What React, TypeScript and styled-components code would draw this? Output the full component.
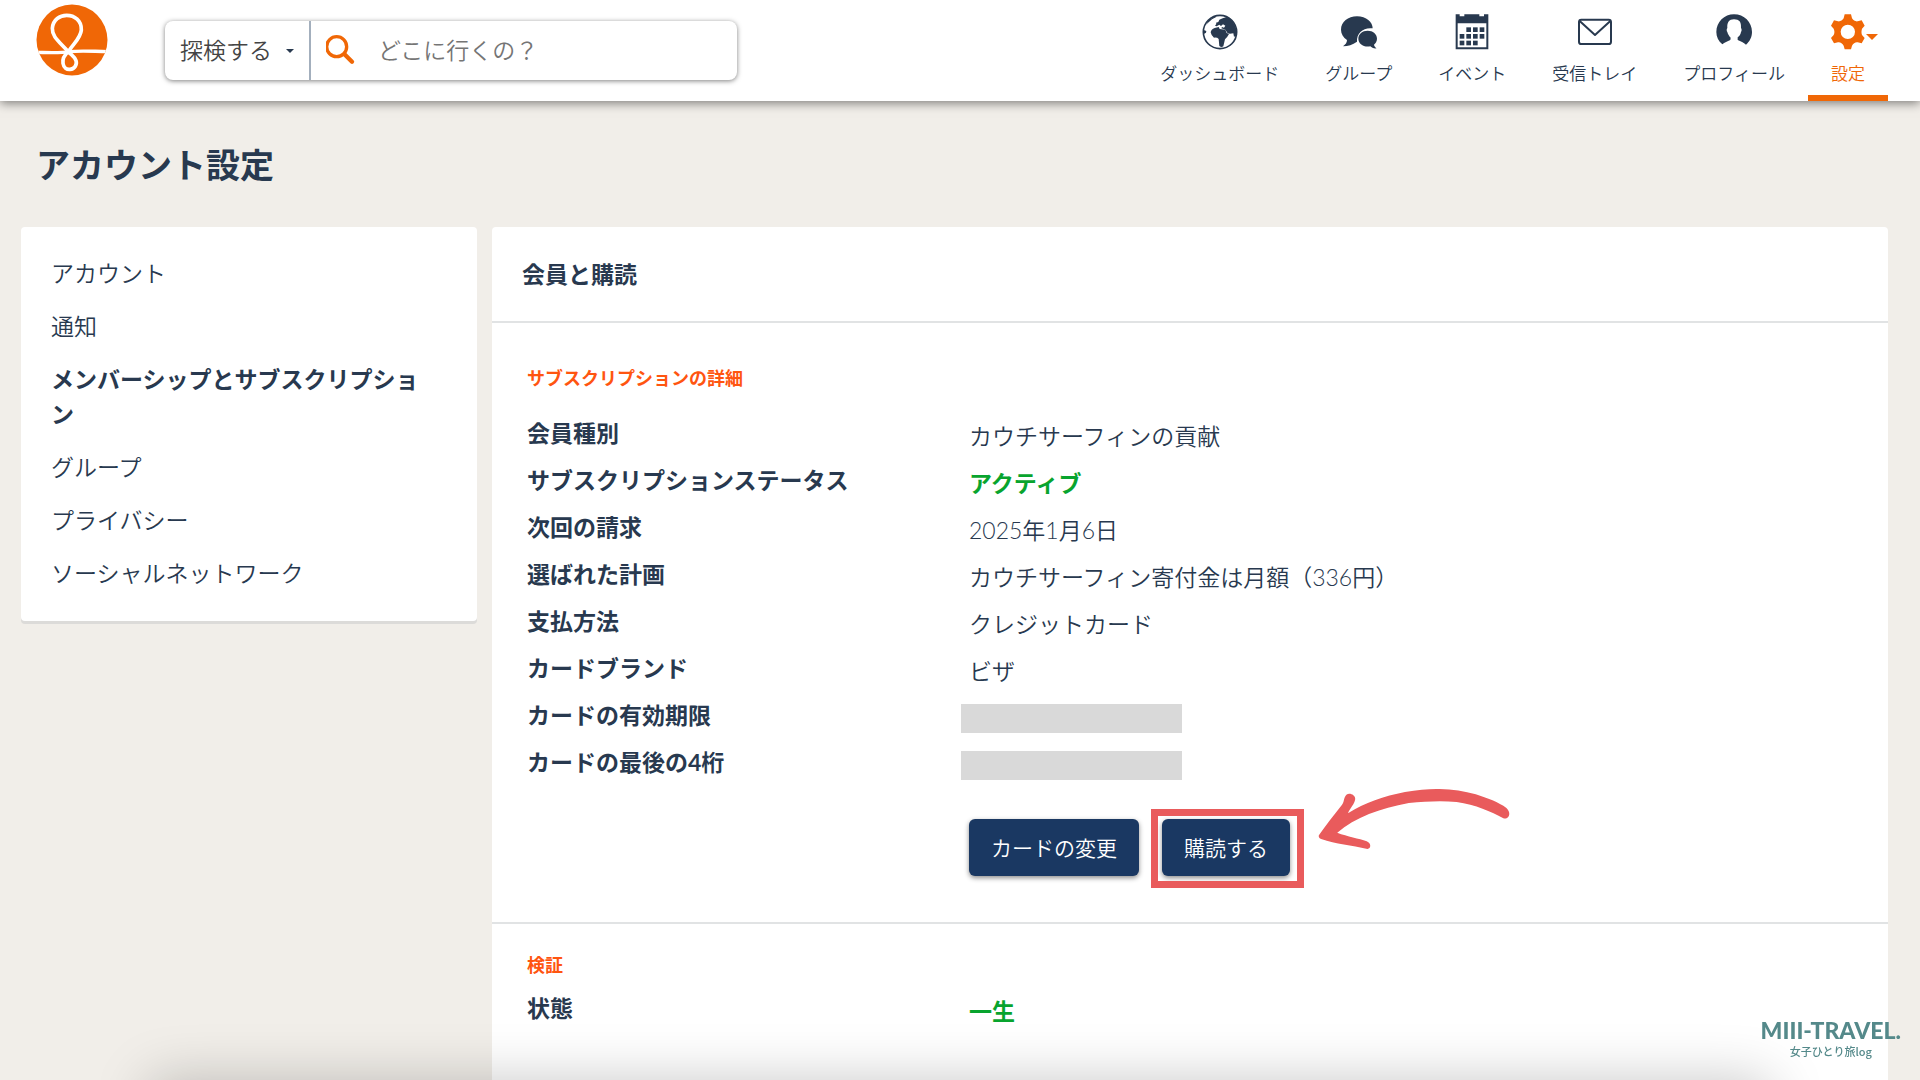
import React from 'react';
import styled, { createGlobalStyle } from 'styled-components';

const color = {
  page: '#f1eee9',
  ink: '#28394f',
  orange: '#f06706',
  heading: '#ff5510',
  green: '#08a42e',
  navy: '#1a3862',
  line: '#e1e3e4',
  mask: '#d9d9d9',
  mark: '#e95b5c',
  brand: '#54898a',
};

const GlobalStyle = createGlobalStyle`
  *, *::before, *::after { box-sizing: border-box; }
  body {
    margin: 0;
    background: ${color.page};
    color: ${color.ink};
    font-family: Lato, 'Noto Sans CJK JP', sans-serif;
    font-size: 23px;
    font-weight: 350;
    line-height: 35px;
  }
  h1, h2, h3, ul, dl, dd { margin: 0; padding: 0; }
  a { color: inherit; text-decoration: none; }
`;

const Page = styled.div`
  display: flex;
  flex-direction: column;
  min-height: 100vh;
`;

const Header = styled.header`
  display: flex;
  align-items: center;
  height: 101px;
  padding: 0 32px 0 36px;
  background: #fff;
  box-shadow: 0 2px 10px rgba(0, 0, 0, 0.5);
`;

const LogoLink = styled.a`
  align-self: flex-start;
  margin: 4px 57px 0 0;
  svg { display: block; }
`;

const SearchForm = styled.form`
  display: flex;
  flex: 0 1 572px;
  height: 59px;
  border-radius: 8px;
  background: #fff;
  box-shadow: 0 1px 5px rgba(0, 0, 0, 0.5);
`;

const SearchScope = styled.label`
  display: flex;
  align-items: center;
  flex: none;
  width: 146px;
  padding: 0 15px;
  border-right: 2px solid #a3afbd;
`;

const ScopeSelect = styled.select`
  appearance: none;
  flex: 1;
  min-width: 0;
  padding: 0;
  border: 0;
  background: none;
  color: #444;
  font: inherit;
`;

const SearchField = styled.label`
  display: flex;
  align-items: center;
  flex: 1;
  min-width: 0;
  gap: 20px;
  padding: 0 15px;
  svg { flex: none; }
`;

const SearchInput = styled.input`
  flex: 1;
  min-width: 0;
  padding: 0;
  border: 0;
  outline: 0;
  background: none;
  color: #444;
  font: inherit;
  &::placeholder { color: #757575; opacity: 1; }
`;

const Nav = styled.nav`
  display: flex;
  align-self: stretch;
  margin-left: auto;
`;

const NavLink = styled.a<{ $active?: boolean }>`
  display: flex;
  flex-direction: column;
  align-items: center;
  gap: 12px;
  padding: 14px 23px 0;
  color: ${(p) => (p.$active ? color.orange : color.ink)};
  font-size: 17px;
  line-height: 24px;
  white-space: nowrap;
  border-bottom: 6px solid ${(p) => (p.$active ? color.orange : 'transparent')};
`;

const IconBox = styled.span`
  position: relative;
  display: block;
  height: 36px;
  margin: 0 -1px;
  svg { display: block; }
`;

const MenuCaret = styled.span`
  position: absolute;
  left: 100%;
  top: 20px;
`;

const PageTitle = styled.h1`
  padding: 40px 36px 38px;
  font-size: 34px;
  line-height: 48px;
`;

const Columns = styled.div`
  display: grid;
  grid-template-columns: 456px minmax(0, 1fr);
  gap: 15px;
  flex: 1;
  padding: 0 32px 0 21px;
`;

const SideMenu = styled.nav`
  align-self: start;
  padding: 29px 36px 30px 30px;
  border-radius: 4px;
  background: #fff;
  box-shadow: 0 3px 0 #dcdbd9;
`;

const MenuList = styled.ul`
  display: flex;
  flex-direction: column;
  gap: 18px;
  list-style: none;
`;

const MenuLink = styled.a<{ $active?: boolean }>`
  display: block;
  font-weight: ${(p) => (p.$active ? 700 : 'inherit')};
`;

const Panel = styled.main`
  border-radius: 4px 4px 0 0;
  background: #fff;
`;

const PanelTitle = styled.h2`
  padding: 30px;
  border-bottom: 2px solid ${color.line};
  font-size: 23px;
  line-height: 34px;
`;

const Section = styled.section<{ $compact?: boolean }>`
  padding: ${(p) => (p.$compact ? '29px 35px' : '43px 35px 46px')};
  & + & { border-top: 2px solid ${color.line}; }
`;

const SectionTitle = styled.h3<{ $compact?: boolean }>`
  margin-bottom: ${(p) => (p.$compact ? '8px' : '20px')};
  color: ${color.heading};
  font-size: 18px;
  line-height: 24px;
`;

const Row = styled.div`
  display: grid;
  grid-template-columns: 1fr 2fr;
  height: 47px;
`;

const Term = styled.dt`
  font-weight: 700;
  line-height: 47px;
`;

const Value = styled.dd<{ $good?: boolean }>`
  display: flex;
  align-items: center;
  padding-top: 5px;
  ${(p) => p.$good && `color: ${color.green}; font-weight: 700;`}
`;

const Mask = styled.span`
  width: 221px;
  height: 29px;
  margin-left: -8px;
  background: ${color.mask};
`;

const ActionRow = styled.div`
  display: grid;
  grid-template-columns: 1fr 2fr;
  margin-top: 33px;
`;

const Actions = styled.div`
  display: flex;
  grid-column: 2;
  gap: 23px;
`;

const Button = styled.button`
  height: 57px;
  padding: 0 22px;
  border: 0;
  border-radius: 6px;
  background: ${color.navy};
  color: #fff;
  font: inherit;
  font-size: 21px;
  box-shadow: 0 2px 5px rgba(0, 0, 0, 0.45);
`;

const Marked = styled.div`
  position: relative;
  &::after {
    content: '';
    position: absolute;
    inset: -10px -14px -12px -11px;
    border: 7px solid ${color.mark};
    pointer-events: none;
  }
`;

const ArrowBox = styled.div`
  position: absolute;
  left: calc(100% + 27px);
  top: -32px;
  pointer-events: none;
  svg { display: block; }
`;

const BottomShade = styled.div`
  position: fixed;
  left: 150px;
  right: 150px;
  top: 100%;
  height: 120px;
  box-shadow: 0 0 55px rgba(0, 0, 0, 0.22);
  pointer-events: none;
`;

const Watermark = styled.div`
  position: fixed;
  right: 19px;
  bottom: 21px;
  color: ${color.brand};
  text-align: center;
`;

const WatermarkName = styled.div`
  font-size: 23px;
  font-weight: 900;
  line-height: 26px;
`;

const WatermarkTag = styled.div`
  font-family: 'Noto Sans CJK JP', sans-serif;
  font-size: 11px;
  font-weight: 500;
  line-height: 16px;
`;

const Logo = () => (
  <svg width="72" height="72" viewBox="106 10 216 216" role="img" aria-label="Couchsurfing">
    <clipPath id="logo-disc"><circle cx="214" cy="118" r="106.5" /></clipPath>
    <circle cx="214" cy="118" r="106.5" fill={color.orange} />
    <g fill="none" stroke="#fff" clipPath="url(#logo-disc)" strokeLinejoin="round">
      <path strokeWidth="10" d="M104 155 C150 156 180 158 205 153 C240 149 270 152 326 153" />
      <path strokeWidth="11" d="M203 153 C175 122 154 108 155 83 C157 56 178 44 198 44 C222 44 243 60 242 88 C240 112 222 124 203 153 C190 164 185 175 187 188 C189 202 199 207 208 206 C222 205 230 192 226 180 C222 168 213 164 203 153Z" />
    </g>
  </svg>
);

const SearchIcon = () => (
  <svg width="32" height="32" viewBox="6 5 96 96" aria-hidden="true">
    <g fill="none" stroke={color.orange} strokeWidth="10">
      <circle cx="38" cy="40" r="30" />
      <path strokeWidth="13" strokeLinecap="round" d="M63 64 L84 85" />
    </g>
  </svg>
);

const GlobeIcon = () => (
  <svg width="36" height="36" viewBox="0 0 108 108" aria-hidden="true">
    <circle cx="54" cy="54" r="50" fill="none" stroke="currentColor" strokeWidth="5" />
    <path fill="currentColor" d="M26 55 Q27 46 38 42 L50 39 L53 45 L70 47 L74 57 L81 60 Q76 70 69 76 L64 97 Q58 101 52 96 L50 75 Q46 70 36 71 Q28 66 26 55Z" />
    <path fill="currentColor" d="M39 35 L43 30 L42 26 L49 24 L52 17 L62 13 L76 8 Q98 20 104 50 L102 66 L96 68 L94 58 L84 59 L77 58 L70 47 L58 43 L60 39 L66 41 L70 35 L63 31 L57 36 L52 32 L44 37Z" />
    <path fill="currentColor" d="M5 48 L13 51 L12 56 L5 60Z M20 18 L35 9 L44 8 L30 16 L20 25 L12 32Z" />
  </svg>
);

const ChatIcon = () => (
  <svg width="36" height="36" viewBox="604 41 108 108" aria-hidden="true">
    <path fill="currentColor" d="M652 48 C680 48 699 66 699 84 C672 80 650 98 652 124 C638 133 626 138 610 138 C618 132 622 127 622 119 C611 111 604 100 604 88 C604 65 625 48 652 48Z" />
    <path fill="currentColor" d="M684 91 C700 91 712 101 712 115 C712 123 708 129 703 133 C704 138 707 141 711 144 C702 145 696 142 692 138 C672 142 656 130 656 115 C656 101 668 91 684 91Z" />
  </svg>
);

const calendarDays = [
  [977, 81], [997, 81], [1017, 81],
  [957, 101], [977, 101], [997, 101], [1017, 101],
  [957, 121], [977, 121], [997, 121],
];

const CalendarIcon = () => (
  <svg width="36" height="36" viewBox="940 41 108 108" aria-hidden="true">
    <path fill="currentColor" fillRule="evenodd" d="M945 42H957V48H971V42H1016V48H1030V42H1043V147H945Z M951 69V141H1037V69Z" />
    {calendarDays.map(([x, y]) => (
      <rect key={`${x}-${y}`} x={x} y={y} width="14" height="14" fill="currentColor" />
    ))}
  </svg>
);

const MailIcon = () => (
  <svg width="36" height="36" viewBox="228 41 108 108" aria-hidden="true">
    <g fill="none" stroke="currentColor" strokeWidth="6" strokeLinejoin="round">
      <rect x="234" y="58" width="96" height="73" rx="7" />
      <path d="M236 62 L282 104 L328 62" />
    </g>
  </svg>
);

const ProfileIcon = () => (
  <svg width="36" height="36" viewBox="648 41 108 108" aria-hidden="true">
    <path fill="currentColor" d="M667 132 C655 123 649 109 649 95 C649 65 673 42 702 42 C732 42 756 65 756 95 C756 110 749 124 738 133 C731 127 722 123 713 119 L713 111 C719 107 722 101 723 95 C726 91 725 86 723 83 C724 65 718 57 702 57 C687 57 681 66 682 83 C679 87 680 92 682 95 C684 102 687 107 692 112 L691 119 C682 123 674 126 667 132Z" />
  </svg>
);

const GearIcon = () => (
  <svg width="36" height="36" viewBox="992 41 108 108" aria-hidden="true">
    <path fill="currentColor" fillRule="evenodd" d="M1036 42H1055L1058 54C1062 60 1068 64 1075 63L1087 60L1096 76L1088 85C1086 92 1086 98 1088 104L1096 113L1087 129L1075 126C1068 125 1062 129 1058 136L1055 147H1036L1033 136C1029 129 1023 125 1016 126L1004 129L995 113L1003 104C1006 98 1006 92 1003 85L995 76L1004 60L1016 63C1023 64 1029 60 1033 54Z M1045.500 73A21.500 21.500 0 1 0 1045.500 116A21.500 21.500 0 1 0 1045.500 73Z" />
  </svg>
);

const Caret = ({ width }: { width: number }) => (
  <svg width={width} height={width / 2} viewBox="0 0 12 6" aria-hidden="true">
    <path fill="currentColor" d="M0 0H12L6 6Z" />
  </svg>
);

const HandArrow = () => (
  <svg width="194" height="66" viewBox="0 0 194 66" aria-hidden="true">
    <g transform="translate(-377 -27) scale(0.3827 0.3333)">
      <path fill={color.mark} d="M990 226 C1008 195 1030 165 1050 135 C1057 125 1054 113 1062 104 C1070 97 1085 104 1085 117 C1083 133 1072 143 1066 160 C1110 128 1160 108 1215 96 C1250 90 1280 86 1305 87 C1340 88 1370 93 1400 103 C1430 114 1460 127 1480 144 C1495 160 1485 180 1472 175 C1440 155 1400 134 1350 126 C1310 121 1270 124 1225 129 C1150 145 1085 172 1038 218 C1065 230 1095 235 1115 244 C1128 250 1126 266 1117 267 C1075 256 1035 252 996 237 C990 234 989 230 990 226Z" />
    </g>
  </svg>
);

const navItems = [
  { label: 'ダッシュボード', Icon: GlobeIcon },
  { label: 'グループ', Icon: ChatIcon },
  { label: 'イベント', Icon: CalendarIcon },
  { label: '受信トレイ', Icon: MailIcon },
  { label: 'プロフィール', Icon: ProfileIcon },
  { label: '設定', Icon: GearIcon, active: true },
];

const menuItems = [
  { label: 'アカウント' },
  { label: '通知' },
  { label: 'メンバーシップとサブスクリプション', active: true },
  { label: 'グループ' },
  { label: 'プライバシー' },
  { label: 'ソーシャルネットワーク' },
];

const details: { term: string; value?: string; good?: boolean }[] = [
  { term: '会員種別', value: 'カウチサーフィンの貢献' },
  { term: 'サブスクリプションステータス', value: 'アクティブ', good: true },
  { term: '次回の請求', value: '2025年1月6日' },
  { term: '選ばれた計画', value: 'カウチサーフィン寄付金は月額（336円）' },
  { term: '支払方法', value: 'クレジットカード' },
  { term: 'カードブランド', value: 'ビザ' },
  { term: 'カードの有効期限' },
  { term: 'カードの最後の4桁' },
];

export default function App() {
  return (
    <Page lang="ja">
      <GlobalStyle />
      <Header>
        <LogoLink href="#home"><Logo /></LogoLink>
        <SearchForm role="search" onSubmit={(e) => e.preventDefault()}>
          <SearchScope>
            <ScopeSelect aria-label="探検する" defaultValue="explore">
              <option value="explore">探検する</option>
            </ScopeSelect>
            <Caret width={8} />
          </SearchScope>
          <SearchField>
            <SearchIcon />
            <SearchInput type="text" aria-label="どこに行くの？" placeholder="どこに行くの？" />
          </SearchField>
        </SearchForm>
        <Nav>
          {navItems.map(({ label, Icon, active }) => (
            <NavLink key={label} href="#nav" $active={active} aria-current={active ? 'page' : undefined}>
              <IconBox>
                <Icon />
                {active && <MenuCaret><Caret width={12} /></MenuCaret>}
              </IconBox>
              {label}
            </NavLink>
          ))}
        </Nav>
      </Header>
      <PageTitle>アカウント設定</PageTitle>
      <Columns>
        <SideMenu>
          <MenuList>
            {menuItems.map(({ label, active }) => (
              <li key={label}>
                <MenuLink href="#menu" $active={active}>{label}</MenuLink>
              </li>
            ))}
          </MenuList>
        </SideMenu>
        <Panel>
          <PanelTitle>会員と購読</PanelTitle>
          <Section>
            <SectionTitle>サブスクリプションの詳細</SectionTitle>
            <dl>
              {details.map(({ term, value, good }) => (
                <Row key={term}>
                  <Term>{term}</Term>
                  <Value $good={good}>{value ?? <Mask />}</Value>
                </Row>
              ))}
            </dl>
            <ActionRow>
              <Actions>
                <Button type="button">カードの変更</Button>
                <Marked>
                  <Button type="button">購読する</Button>
                  <ArrowBox><HandArrow /></ArrowBox>
                </Marked>
              </Actions>
            </ActionRow>
          </Section>
          <Section $compact>
            <SectionTitle $compact>検証</SectionTitle>
            <dl>
              <Row>
                <Term>状態</Term>
                <Value $good>一生</Value>
              </Row>
            </dl>
          </Section>
        </Panel>
      </Columns>
      <BottomShade />
      <Watermark>
        <WatermarkName>MIII-TRAVEL.</WatermarkName>
        <WatermarkTag>女子ひとり旅log</WatermarkTag>
      </Watermark>
    </Page>
  );
}
